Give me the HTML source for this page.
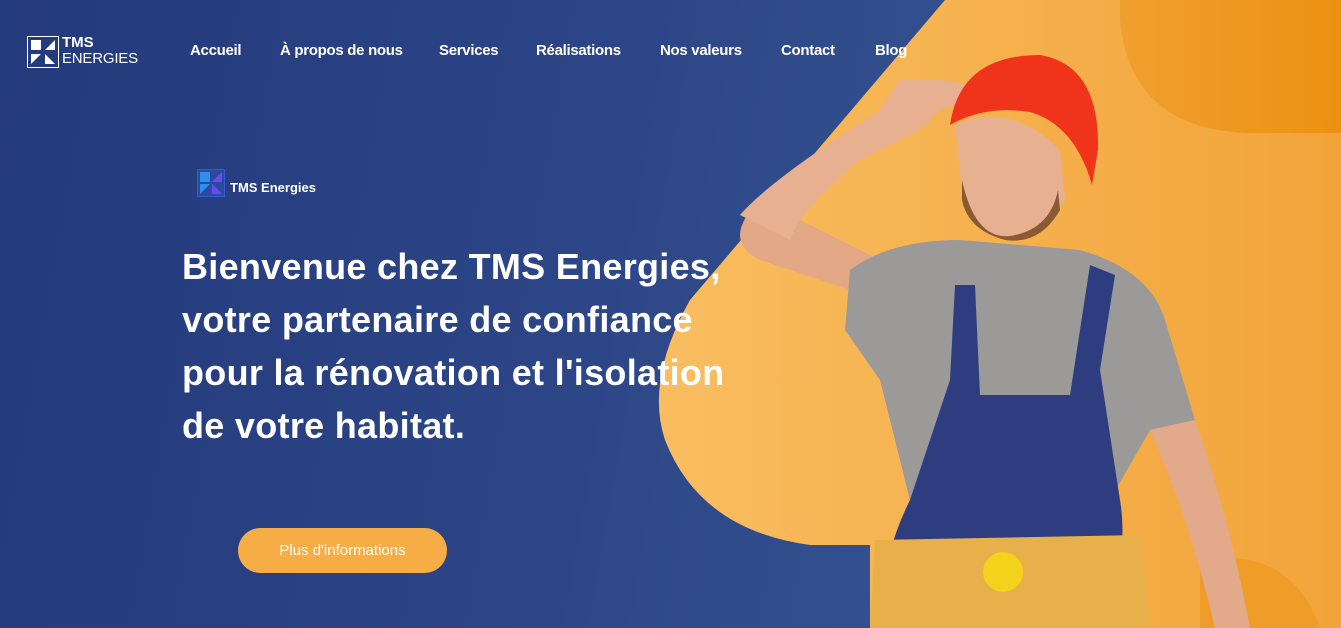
<!DOCTYPE html>
<html><head><meta charset="utf-8"><style>
*{margin:0;padding:0;box-sizing:border-box}
body{width:1341px;height:628px;overflow:hidden;position:relative;font-family:"Liberation Sans",sans-serif;background:linear-gradient(100deg,#233a7b 0%,#2d4687 45%,#34518f 70%)}
svg.bg{position:absolute;left:0;top:0}
.nav a{position:absolute;top:42px;color:#fff;font-weight:bold;font-size:15px;text-decoration:none;letter-spacing:-0.3px}
h1{position:absolute;left:182px;top:240px;color:#fff;font-size:36px;line-height:53px;font-weight:bold;letter-spacing:0.3px}
.btn{position:absolute;left:238px;top:528px;width:209px;height:45px;border-radius:23px;background:#f6ad45;color:#fff;font-size:15px;text-align:center;line-height:45px}
</style></head><body>
<svg class="bg" width="1341" height="628" viewBox="0 0 1341 628">
<defs>
<linearGradient id="og" x1="0" y1="0" x2="1" y2="0"><stop offset="0" stop-color="#f9bd60"/><stop offset="1" stop-color="#f2a43a"/></linearGradient>
<linearGradient id="dg" x1="0" y1="0" x2="1" y2="0"><stop offset="0" stop-color="#f0a030"/><stop offset="1" stop-color="#ec9012"/></linearGradient>
</defs>
<path d="M945 0 L1341 0 L1341 628 L870 628 L870 545 L810 545 Q700 530 665 440 Q645 380 690 300 Z" fill="url(#og)"/>
<path d="M1120 0 L1341 0 L1341 133 L1250 133 Q1130 130 1120 20 Z" fill="url(#dg)"/>
<path d="M1200 560 Q1290 545 1320 628 L1200 628 Z" fill="#ef9d28"/>
<path d="M760 200 Q720 240 760 260 L850 290 L870 320 L940 290 Z" fill="#e3a886"/>
<path d="M740 215 Q770 180 880 110 L900 80 Q960 75 985 95 L940 110 L920 130 L860 160 Q800 210 790 240 Z" fill="#e6b091"/>
<path d="M850 270 Q890 240 960 240 L1080 250 Q1150 270 1165 320 L1195 420 L1150 430 L1110 500 L910 500 L880 380 L845 330 Z" fill="#9c9a98"/>
<path d="M1150 430 L1195 420 Q1230 520 1250 628 L1215 628 Q1190 520 1150 430Z" fill="#e2a98a"/>
<path d="M955 125 Q1010 100 1060 150 L1065 200 Q1040 240 1000 238 Q965 230 962 190 Z" fill="#e6b091"/>
<path d="M962 180 Q975 240 1010 236 Q1050 230 1058 190 L1060 210 Q1040 245 1005 240 Q968 230 962 200Z" fill="#8a5a35"/>
<path d="M950 125 Q960 55 1040 55 Q1100 65 1098 150 L1092 185 Q1075 125 1030 112 Q985 105 950 125Z" fill="#f0341c"/>
<path d="M955 285 L975 285 L980 395 L1070 395 L1090 265 L1115 275 L1100 370 L1120 500 Q1130 560 1100 628 L880 628 Q880 560 910 500 L950 380Z" fill="#2e3d80"/>
<path d="M875 540 L1140 535 L1150 628 L870 628Z" fill="#e8b04a"/>
<circle cx="1003" cy="572" r="20" fill="#f2d21a"/>
</svg>
<svg style="position:absolute;left:27px;top:36px" width="32" height="32" viewBox="0 0 32 32"><rect x="0.5" y="0.5" width="31" height="31" fill="none" stroke="#fff"/><path d="M4 4 L14 4 L14 14Z M28 4 L28 14 L18 14Z M28 28 L18 28 L18 18Z M4 28 L4 18 L14 18Z M4 4 L4 14 L14 14 Z" fill="#fff"/></svg>
<div style="position:absolute;left:62px;top:35px;color:#fff;font-size:15px;line-height:15px;font-weight:bold">TMS</div>
<div style="position:absolute;left:62px;top:51px;color:#fff;font-size:15px;line-height:15px;letter-spacing:-0.2px">ENERGIES</div>
<div class="nav"><a style="left:190px">Accueil</a><a style="left:280px">À propos de nous</a><a style="left:439px">Services</a><a style="left:536px">Réalisations</a><a style="left:660px">Nos valeurs</a><a style="left:781px">Contact</a><a style="left:875px">Blog</a></div>
<svg style="position:absolute;left:197px;top:169px" width="28" height="28" viewBox="0 0 28 28"><rect x="0.5" y="0.5" width="27" height="27" fill="#2a4aa0" stroke="#3a5ad0"/><path d="M3 3 L13 3 L13 13Z M25 3 L25 13 L15 13Z M25 25 L15 25 L15 15Z M3 25 L3 15 L13 15Z M3 3 L3 13 L13 13Z" fill="#2e8ff0"/><path d="M25 3 L25 13 L15 13Z M25 25 L15 25 L15 15Z" fill="#6b4bf0"/></svg>
<div style="position:absolute;left:230px;top:180px;color:#fff;font-size:13px;font-weight:bold">TMS Energies</div>
<h1>Bienvenue chez TMS Energies,<br>votre partenaire de confiance<br>pour la rénovation et l'isolation<br>de votre habitat.</h1>
<div class="btn">Plus d'informations</div>
</body></html>
